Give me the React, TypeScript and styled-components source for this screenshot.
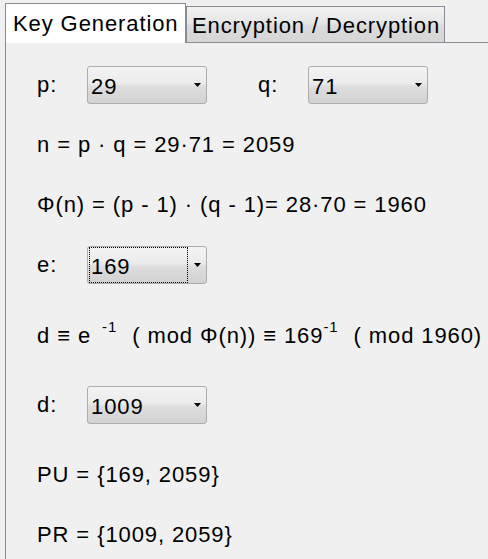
import React from 'react'
import styled, { createGlobalStyle } from 'styled-components'

const GlobalStyle = createGlobalStyle`
  html, body {
    margin: 0;
    padding: 0;
    background: #f0f0f0;
  }
  body {
    font-family: "Liberation Sans", Arial, sans-serif;
    font-size: 22px;
    letter-spacing: 0.9px;
    color: #000;
    overflow: hidden;
  }
`

const Window = styled.div`
  width: 488px;
  height: 559px;
  box-sizing: border-box;
  padding: 3px 0 0 5px;
  display: flex;
  flex-direction: column;
  overflow: hidden;
`

const TabStrip = styled.div`
  display: flex;
  align-items: flex-end;
  height: 39px;
  flex: none;
`

const Tab = styled.div<{ $active?: boolean }>`
  box-sizing: border-box;
  display: flex;
  align-items: center;
  white-space: nowrap;
  border: 1px solid #898c95;
  border-bottom: none;
  ${({ $active }) =>
    $active
      ? `
    position: relative;
    z-index: 1;
    width: 181px;
    height: 40px;
    margin-bottom: -1px;
    padding: 1px 0 0 7px;
    background: #fff;
  `
      : `
    width: 259px;
    height: 36px;
    padding: 3px 0 0 5px;
    background: linear-gradient(#f2f2f2, #e6e6e6 45%, #dadada 55%, #d6d6d6);
  `}
`

const Panel = styled.div`
  flex: 1;
  border-top: 1px solid #898c95;
  border-left: 1px solid #898c95;
  background: #f0f0f0;
  padding: 12px 0 0 31px;
  display: flex;
  flex-direction: column;
`

const Row = styled.div<{ $h: number }>`
  height: ${({ $h }) => $h}px;
  display: flex;
  align-items: center;
  gap: 51px;
  white-space: nowrap;
  flex: none;
`

const Field = styled.div`
  display: flex;
  align-items: center;
`

const Label = styled.span`
  width: 50px;
`

const Combo = styled.div`
  box-sizing: border-box;
  width: 120px;
  height: 38px;
  border: 1px solid #acacac;
  border-radius: 3px;
  background: linear-gradient(#f3f3f3, #ebebeb 45%, #dddddd 55%, #d2d2d2);
  display: flex;
  align-items: center;
  justify-content: space-between;
  padding: 0 5px 0 1px;
`

const ComboValue = styled.div<{ $focused?: boolean }>`
  box-sizing: border-box;
  width: 99px;
  height: 36px;
  display: flex;
  align-items: center;
  padding: 3px 0 0 1px;
  border: 1px dotted ${({ $focused }) => ($focused ? '#000' : 'transparent')};
`

const Sup = styled.span<{ $gap?: number }>`
  font-size: 15px;
  line-height: 0;
  vertical-align: 11px;
  margin-left: ${({ $gap }) => $gap ?? 0}px;
  margin-right: 8px;
`

const Arrow = () => (
  <svg width="7" height="4" viewBox="0 0 7 4">
    <path d="M0 0h7L3.5 4z" fill="#000" />
  </svg>
)

const Dropdown: React.FC<{ value: string; focused?: boolean }> = ({ value, focused }) => (
  <Combo>
    <ComboValue $focused={focused}>{value}</ComboValue>
    <Arrow />
  </Combo>
)

export default function App() {
  return (
    <>
      <GlobalStyle />
      <Window>
        <TabStrip>
          <Tab $active>Key Generation</Tab>
          <Tab>Encryption / Decryption</Tab>
        </TabStrip>
        <Panel>
          <Row $h={60}>
            <Field>
              <Label>p:</Label>
              <Dropdown value="29" />
            </Field>
            <Field>
              <Label>q:</Label>
              <Dropdown value="71" />
            </Field>
          </Row>
          <Row $h={60}>n = p · q = 29·71 = 2059</Row>
          <Row $h={60}>Φ(n) = (p - 1) · (q - 1)= 28·70 = 1960</Row>
          <Row $h={60}>
            <Field>
              <Label>e:</Label>
              <Dropdown value="169" focused />
            </Field>
          </Row>
          <Row $h={82}>
            <span>
              d ≡ e <Sup $gap={4}>-1</Sup> ( mod Φ(n)) ≡ 169<Sup>-1</Sup> ( mod 1960)
            </span>
          </Row>
          <Row $h={56}>
            <Field>
              <Label>d:</Label>
              <Dropdown value="1009" />
            </Field>
          </Row>
          <Row $h={84}>PU = {'{'}169, 2059{'}'}</Row>
          <Row $h={36}>PR = {'{'}1009, 2059{'}'}</Row>
        </Panel>
      </Window>
    </>
  )
}
